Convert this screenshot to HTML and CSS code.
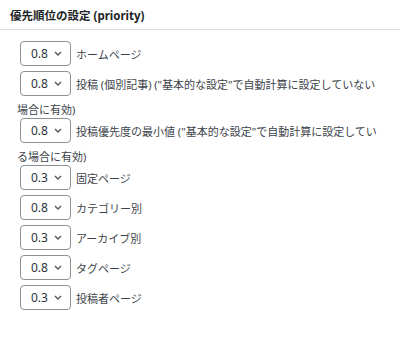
FILE: index.html
```html
<!DOCTYPE html>
<html lang="ja">
<head>
    <meta charset="UTF-8">
    <meta name="viewport" content="width=device-width, initial-scale=1.0">
    <title>優先順位の設定</title>
    <link rel="stylesheet" href="styles.css">
</head>
<body>

<div class="postbox">
    <h2 class="postbox-title">優先順位の設定 (priority)</h2>

    <div class="inside">
        <p class="row">
            <span class="pick"><select><option>0.8</option></select><svg viewBox="0 0 8 5"><path d="M1 1l3 3 3-3"/></svg></span>ホームページ
        </p>
        <p class="row">
            <span class="pick"><select><option>0.8</option></select><svg viewBox="0 0 8 5"><path d="M1 1l3 3 3-3"/></svg></span>投稿 (個別記事) ("基本的な設定"で自動計算に設定していない場合に有効)
        </p>
        <p class="row">
            <span class="pick"><select><option>0.8</option></select><svg viewBox="0 0 8 5"><path d="M1 1l3 3 3-3"/></svg></span>投稿優先度の最小値 ("基本的な設定"で自動計算に設定している場合に有効)
        </p>
        <p class="row">
            <span class="pick"><select><option>0.3</option></select><svg viewBox="0 0 8 5"><path d="M1 1l3 3 3-3"/></svg></span>固定ページ
        </p>
        <p class="row">
            <span class="pick"><select><option>0.8</option></select><svg viewBox="0 0 8 5"><path d="M1 1l3 3 3-3"/></svg></span>カテゴリー別
        </p>
        <p class="row">
            <span class="pick"><select><option>0.3</option></select><svg viewBox="0 0 8 5"><path d="M1 1l3 3 3-3"/></svg></span>アーカイブ別
        </p>
        <p class="row">
            <span class="pick"><select><option>0.8</option></select><svg viewBox="0 0 8 5"><path d="M1 1l3 3 3-3"/></svg></span>タグページ
        </p>
        <p class="row">
            <span class="pick"><select><option>0.3</option></select><svg viewBox="0 0 8 5"><path d="M1 1l3 3 3-3"/></svg></span>投稿者ページ
        </p>
    </div>
</div>

</body>
</html>
```

FILE: styles.css
```css
body {
    font-family: "Noto Sans", "Noto Sans CJK JP", sans-serif;
    background-color: #fff;
    color: #3c434a;
    margin: 0;
    padding: 0;
}
.postbox-title {
    margin: 0;
    padding: 3px 10px 0;
    height: 26px;
    line-height: 26px;
    font-size: 11.5px;
    font-weight: bold;
    color: #1d2327;
    border-bottom: 1px solid #dcdcde;
}
.inside {
    padding: 11px 18px 0 17px;
}
.row {
    margin: 0;
    font-size: 11px;
    line-height: 17px;
}
.pick {
    position: relative;
    display: inline-block;
    vertical-align: middle;
    margin: 0 5px 5px 3px;
}
.pick select {
    display: block;
    width: 51px;
    height: 25px;
    padding: 0 0 0 10px;
    border: 1px solid #8c8f94;
    border-radius: 4px;
    background-color: #fff;
    color: #2c3338;
    font-family: "Noto Sans", sans-serif;
    font-size: 12px;
    -webkit-appearance: none;
    appearance: none;
}
.pick svg {
    position: absolute;
    right: 9px;
    top: 10px;
    width: 8px;
    height: 5px;
    fill: none;
    stroke: #50575e;
    stroke-width: 1.4;
    pointer-events: none;
}
```
